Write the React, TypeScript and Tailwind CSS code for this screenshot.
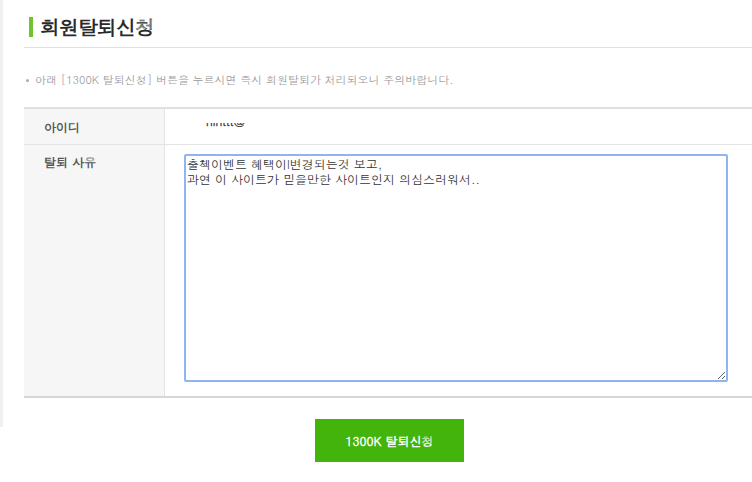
const font = "font-['Dotum','Gulim','Noto_Sans_CJK_KR',sans-serif]";

export default function App() {
  return (
    <div className={`flex h-[482px] w-[752px] overflow-hidden bg-white ${font}`}>
      <div className="h-[427px] w-[3px] shrink-0 bg-[#f0f0f0]" />
      <div className="ml-[21px] flex-1">
        {/* 제목 */}
        <div className="flex h-[48px] items-center border-b border-[#e1e1e1] pl-[5px] pt-[6px]">
          <span className="h-[20px] w-[4px] bg-[#6fc42d]" />
          <h2 className="ml-[7px] text-[20px] leading-[22px] font-bold tracking-[-1px] text-[#2a2a2a]">
            회원탈퇴신청
          </h2>
        </div>

        <p className="mt-[25px] flex items-center text-[11px] leading-[14px] text-[#999]">
          <span className="ml-[2px] mr-[6px] h-[3px] w-[3px] rounded-full bg-[#aaa]" />
          아래 [1300K 탈퇴신청] 버튼을 누르시면 즉시 회원탈퇴가 처리되오니 주의바랍니다.
        </p>

        {/* 표 */}
        <div className="mt-[20px] border-t-2 border-b-2 border-t-[#e0e0e0] border-b-[#d6d6d6]">
          <div className="flex h-[36px] border-b border-[#e3e3e3]">
            <div className="flex w-[141px] shrink-0 items-center border-r border-[#e3e3e3] bg-[#f6f6f6] pl-[20px] text-[12px] font-bold text-[#555]">
              아이디
            </div>
            <div className="relative flex-1">
              <div className="absolute left-[41px] top-[14px] h-[5px] overflow-hidden">
                <span className="-mt-[8px] block text-[12px] leading-[12px] font-bold text-[#444]">
                  hinttt@
                </span>
              </div>
            </div>
          </div>
          <div className="flex h-[251px]">
            <div className="w-[141px] shrink-0 border-r border-[#e3e3e3] bg-[#f6f6f6] pl-[20px] pt-[10px] text-[12px] leading-[14px] font-bold text-[#555]">
              탈퇴 사유
            </div>
            <div className="flex-1 pl-[19px] pt-[9px]">
              <textarea
                className="block h-[228px] w-[544px] rounded-[2px] border-2 border-[#8fb4f3] px-[1px] py-0 text-[12px] leading-[15px] text-[#333] outline-none"
                defaultValue={
                  "출첵이벤트 혜택이l변경되는것 보고,\n과연 이 사이트가 믿을만한 사이트인지 의심스러워서.."
                }
              />
            </div>
          </div>
        </div>

        <div className="mt-[21px] flex justify-center pl-[3px]">
          <button className="h-[43px] w-[149px] bg-[#42b40b] text-[12px] font-bold text-white">
            1300K 탈퇴신청
          </button>
        </div>
      </div>
    </div>
  );
}
